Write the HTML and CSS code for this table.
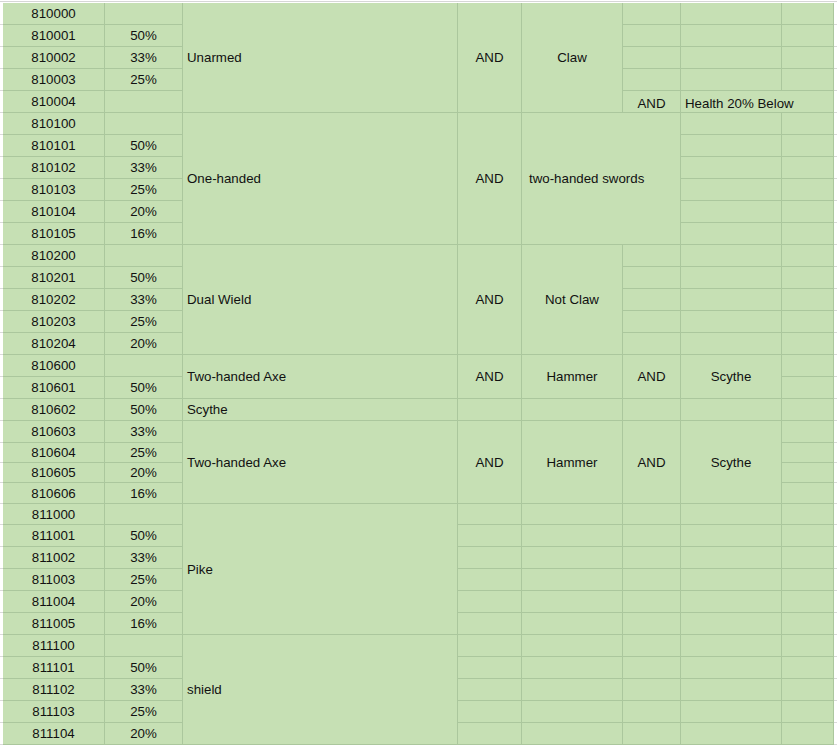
FILE: index.html
```html
<!DOCTYPE html>
<html>
<head>
<meta charset="utf-8">
<link rel="stylesheet" href="styles.css">
</head>
<body>
<div class="topline"></div>
<table class="sheet">
<colgroup>
<col class="w-edge-l"><col class="w-a"><col class="w-b"><col class="w-c"><col class="w-d"><col class="w-e"><col class="w-f"><col class="w-g"><col class="w-h"><col class="w-edge-r">
</colgroup>
<tbody>
<tr><td class="edge"></td><td class="c">810000</td><td class="c"></td><td class="t" rowspan="5">Unarmed</td><td class="c" rowspan="5">AND</td><td class="c" rowspan="5">Claw</td><td></td><td></td><td></td><td class="edge"></td></tr>
<tr><td class="edge"></td><td class="c">810001</td><td class="c">50%</td><td></td><td></td><td></td><td class="edge"></td></tr>
<tr><td class="edge"></td><td class="c">810002</td><td class="c">33%</td><td></td><td></td><td></td><td class="edge"></td></tr>
<tr><td class="edge"></td><td class="c">810003</td><td class="c">25%</td><td></td><td></td><td></td><td class="edge"></td></tr>
<tr><td class="edge"></td><td class="c">810004</td><td class="c"></td><td class="c low">AND</td><td class="t low" colspan="2">Health 20% Below</td><td class="edge"></td></tr>

<tr><td class="edge"></td><td class="c">810100</td><td class="c"></td><td class="t" rowspan="6">One-handed</td><td class="c" rowspan="6">AND</td><td class="t ind" rowspan="6" colspan="2">two-handed swords</td><td></td><td></td><td class="edge"></td></tr>
<tr><td class="edge"></td><td class="c">810101</td><td class="c">50%</td><td></td><td></td><td class="edge"></td></tr>
<tr><td class="edge"></td><td class="c">810102</td><td class="c">33%</td><td></td><td></td><td class="edge"></td></tr>
<tr><td class="edge"></td><td class="c">810103</td><td class="c">25%</td><td></td><td></td><td class="edge"></td></tr>
<tr><td class="edge"></td><td class="c">810104</td><td class="c">20%</td><td></td><td></td><td class="edge"></td></tr>
<tr><td class="edge"></td><td class="c">810105</td><td class="c">16%</td><td></td><td></td><td class="edge"></td></tr>

<tr><td class="edge"></td><td class="c">810200</td><td class="c"></td><td class="t" rowspan="5">Dual Wield</td><td class="c" rowspan="5">AND</td><td class="c" rowspan="5">Not Claw</td><td></td><td></td><td></td><td class="edge"></td></tr>
<tr><td class="edge"></td><td class="c">810201</td><td class="c">50%</td><td></td><td></td><td></td><td class="edge"></td></tr>
<tr><td class="edge"></td><td class="c">810202</td><td class="c">33%</td><td></td><td></td><td></td><td class="edge"></td></tr>
<tr><td class="edge"></td><td class="c">810203</td><td class="c">25%</td><td></td><td></td><td></td><td class="edge"></td></tr>
<tr><td class="edge"></td><td class="c">810204</td><td class="c">20%</td><td></td><td></td><td></td><td class="edge"></td></tr>

<tr><td class="edge"></td><td class="c">810600</td><td class="c"></td><td class="t" rowspan="2">Two-handed Axe</td><td class="c" rowspan="2">AND</td><td class="c" rowspan="2">Hammer</td><td class="c" rowspan="2">AND</td><td class="c" rowspan="2">Scythe</td><td></td><td class="edge"></td></tr>
<tr><td class="edge"></td><td class="c">810601</td><td class="c">50%</td><td></td><td class="edge"></td></tr>
<tr><td class="edge"></td><td class="c">810602</td><td class="c">50%</td><td class="t">Scythe</td><td></td><td></td><td></td><td></td><td></td><td class="edge"></td></tr>
<tr><td class="edge"></td><td class="c">810603</td><td class="c">33%</td><td class="t" rowspan="4">Two-handed Axe</td><td class="c" rowspan="4">AND</td><td class="c" rowspan="4">Hammer</td><td class="c" rowspan="4">AND</td><td class="c" rowspan="4">Scythe</td><td></td><td class="edge"></td></tr>
<tr class="r20"><td class="edge"></td><td class="c">810604</td><td class="c">25%</td><td></td><td class="edge"></td></tr>
<tr class="r20"><td class="edge"></td><td class="c">810605</td><td class="c">20%</td><td></td><td class="edge"></td></tr>
<tr class="r21"><td class="edge"></td><td class="c">810606</td><td class="c">16%</td><td></td><td class="edge"></td></tr>

<tr class="r21"><td class="edge"></td><td class="c">811000</td><td class="c"></td><td class="t" rowspan="6">Pike</td><td></td><td></td><td></td><td></td><td></td><td class="edge"></td></tr>
<tr><td class="edge"></td><td class="c">811001</td><td class="c">50%</td><td></td><td></td><td></td><td></td><td></td><td class="edge"></td></tr>
<tr><td class="edge"></td><td class="c">811002</td><td class="c">33%</td><td></td><td></td><td></td><td></td><td></td><td class="edge"></td></tr>
<tr><td class="edge"></td><td class="c">811003</td><td class="c">25%</td><td></td><td></td><td></td><td></td><td></td><td class="edge"></td></tr>
<tr><td class="edge"></td><td class="c">811004</td><td class="c">20%</td><td></td><td></td><td></td><td></td><td></td><td class="edge"></td></tr>
<tr><td class="edge"></td><td class="c">811005</td><td class="c">16%</td><td></td><td></td><td></td><td></td><td></td><td class="edge"></td></tr>

<tr><td class="edge"></td><td class="c">811100</td><td class="c"></td><td class="t" rowspan="5">shield</td><td></td><td></td><td></td><td></td><td></td><td class="edge"></td></tr>
<tr><td class="edge"></td><td class="c">811101</td><td class="c">50%</td><td></td><td></td><td></td><td></td><td></td><td class="edge"></td></tr>
<tr><td class="edge"></td><td class="c">811102</td><td class="c">33%</td><td></td><td></td><td></td><td></td><td></td><td class="edge"></td></tr>
<tr><td class="edge"></td><td class="c">811103</td><td class="c">25%</td><td></td><td></td><td></td><td></td><td></td><td class="edge"></td></tr>
<tr><td class="edge"></td><td class="c">811104</td><td class="c">20%</td><td></td><td></td><td></td><td></td><td></td><td class="edge"></td></tr>
</tbody>
</table>
</body>
</html>
```

FILE: styles.css
```css
html, body {
  margin: 0;
  padding: 0;
  background: #ffffff;
}

body {
  font-family: "Liberation Sans", Arial, sans-serif;
  font-size: 13.3px;
  color: #111111;
  overflow: hidden;
}

.topline {
  height: 1px;
  margin-top: 1px;
  margin-bottom: 1px;
  background: #d6d6d6;
}

.sheet {
  table-layout: fixed;
  border-collapse: separate;
  border-spacing: 0;
  width: 837px;
}

.w-edge-l { width: 3px; }
.w-a { width: 102px; }
.w-b { width: 78px; }
.w-c { width: 275px; }
.w-d { width: 64px; }
.w-e { width: 101px; }
.w-f { width: 58px; }
.w-g { width: 101px; }
.w-h { width: 52px; }
.w-edge-r { width: 3px; }

.sheet tr {
  height: 22px;
}

.sheet tr.r20 {
  height: 20px;
}

.sheet tr.r21 {
  height: 21px;
}

.sheet td {
  background: #c6e0b4;
  border-right: 1px solid #abc79d;
  border-bottom: 1px solid #abc79d;
  padding: 0 3px;
  line-height: 15px;
  vertical-align: middle;
  white-space: nowrap;
  overflow: hidden;
}

.sheet td.edge {
  background: #ffffff;
  border-right: none;
  border-bottom: 1px solid #dadada;
  padding: 0;
}

.sheet td.c {
  text-align: center;
}

.sheet td.t {
  text-align: left;
  padding-left: 4px;
}

.sheet td.ind {
  padding-left: 7px;
}

.sheet td.low {
  padding-top: 3px;
}
```
